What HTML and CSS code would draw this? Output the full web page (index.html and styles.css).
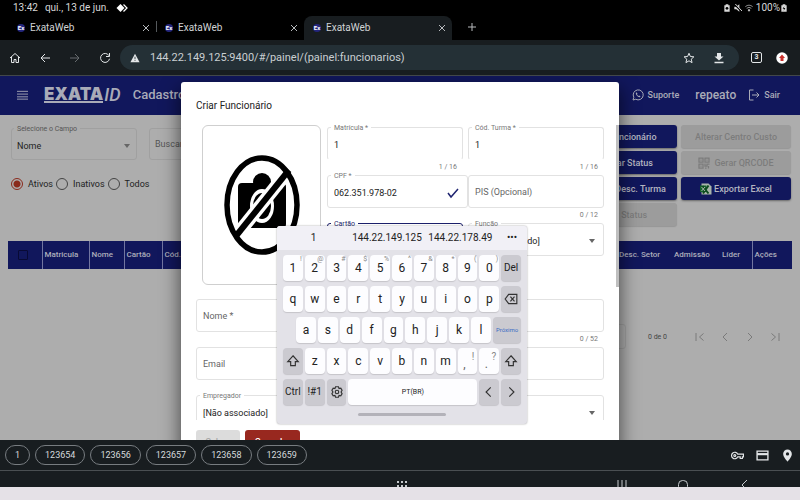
FILE: index.html
```html
<!DOCTYPE html>
<html lang="pt-BR">
<head>
<meta charset="utf-8">
<title>ExataWeb</title>
<link rel="stylesheet" href="styles.css">
</head>
<body>
<div class="status">
  <span>13:42</span><span>qui., 13 de jun.</span>
  <svg class="i12" viewBox="0 0 24 20" fill="currentColor"><path d="M9 2l8 8-8 8-8-8z"/><path d="M15 3l7 7-7 7" fill="none" stroke="currentColor" stroke-width="2.500"/></svg>
  <div class="status-right">
    <svg class="i8" viewBox="0 0 24 24"><path fill="currentColor" d="M8 1h8v3h4v19H4V4h4z"/><circle cx="12" cy="13" r="4" fill="#000"/></svg>
    <svg class="i8" viewBox="0 0 24 24"><path fill="currentColor" d="M1 8h6l9-7v22l-9-7H1z"/><path d="M2 1l21 21" stroke="#000" stroke-width="5"/><path d="M4 0l20 21" stroke="currentColor" stroke-width="3"/></svg>
    <svg class="i8" viewBox="0 0 24 24" fill="none" stroke="currentColor" stroke-width="2"><path d="M1 8q11-9 22 0M5 13q7-6 14 0"/><path d="M9 18q3-3 6 0l-3 4z" fill="currentColor"/></svg>
    <span>100%</span>
    <svg class="i8 batt" viewBox="0 0 24 24"><path fill="currentColor" d="M8 1h8v3h4v19H4V4h4z"/><path d="M13 7l-5 7h4l-1 6 5-8h-4z" fill="#000"/></svg>
  </div>
</div>

<div class="tabs">
  <div class="tab"><span class="fav">Ex</span><span>ExataWeb</span><button aria-label="Fechar"><svg viewBox="0 0 10 10"><path d="M2 2l6 6M8 2L2 8"/></svg></button></div>
  <div class="tab divided"><span class="fav">Ex</span><span>ExataWeb</span><button aria-label="Fechar"><svg viewBox="0 0 10 10"><path d="M2 2l6 6M8 2L2 8"/></svg></button></div>
  <div class="tab active"><span class="fav">Ex</span><span>ExataWeb</span><button aria-label="Fechar"><svg viewBox="0 0 10 10"><path d="M2 2l6 6M8 2L2 8"/></svg></button></div>
  <button class="newtab" aria-label="Nova guia"><svg viewBox="0 0 10 10"><path d="M5 1v8M1 5h8"/></svg></button>
</div>

<div class="toolbar">
  <button aria-label="Início"><svg viewBox="0 0 24 24"><path d="M2 12L12 3l10 9M5 10v11h5v-6h4v6h5V10"/></svg></button>
  <button aria-label="Voltar"><svg viewBox="0 0 24 24"><path d="M22 12H4M12 4l-8 8 8 8"/></svg></button>
  <button class="off" aria-label="Avançar"><svg viewBox="0 0 24 24"><path d="M2 12h18M12 4l8 8-8 8"/></svg></button>
  <button aria-label="Recarregar"><svg viewBox="0 0 24 24"><path d="M20 7.500a9 9 0 1 0 1 6M21 2v7h-7"/></svg></button>
  <div class="omni">
    <svg class="warn" viewBox="0 0 24 24"><path fill="#e3e6e8" d="M12 2l11 20H1z"/><path d="M12 9v6M12 17v2" stroke="#243036" stroke-width="2"/></svg>
    <input type="text" aria-label="Endereço" value="144.22.149.125:9400/#/painel/(painel:funcionarios)">
    <button aria-label="Favorito"><svg viewBox="0 0 24 24"><path d="M12 2.500l2.800 6.500 7 .6-5.300 4.700 1.600 7L12 17.600l-6.100 3.700 1.600-7L2.200 9.600l7-.6z"/></svg></button>
    <button aria-label="Baixar"><svg viewBox="0 0 24 24"><path d="M8 2h8v7h5l-9 8-9-8h5z" fill="currentColor" stroke="none"/><path d="M3 21h18" stroke-width="3"/></svg></button>
  </div>
  <button class="count">3</button>
  <button class="ext" aria-label="Atualizar"><svg viewBox="0 0 24 24"><circle cx="12" cy="12" r="11.500" fill="#fff" stroke="none"/><path d="M12 5l6 7h-3v6H9v-6H6z" fill="#c8302c" stroke="none"/></svg></button>
</div>

<div class="page">
  <header class="app">
    <button class="burger" aria-label="Menu"><svg viewBox="0 0 12 10"><path d="M0 1h12M0 4h12M0 7h12M0 9.500h12"/></svg></button>
    <div class="logo"><b>EXATA</b><i>ID</i></div>
    <h1>Cadastro</h1>
    <a href="#" class="sup"><svg viewBox="0 0 24 24"><path d="M2 22l1.600-5.500A10 10 0 1 1 7.500 20.500z"/><path d="M8 7c-1 2 0 5 3 7.500s5 2.500 6 .5l-2.500-2-1.500 1c-1.500-.7-2.500-2-3-3l1-1.500L9.500 7z" fill="currentColor" stroke="none"/></svg>Suporte</a>
    <span class="user">repeato</span>
    <a href="#"><svg viewBox="0 0 24 24"><path d="M11 2H3v20h8M8 12h14M17 7l5 5-5 5"/></svg>Sair</a>
  </header>

  <main>
    <div class="top">
      <div class="filters">
        <div class="row">
          <div class="dim-field sel"><label for="campo">Selecione o Campo</label><select id="campo"><option>Nome</option></select></div>
          <div class="dim-field search"><input type="text" aria-label="Buscar" placeholder="Buscar"></div>
        </div>
        <div class="radios">
          <label><input type="radio" name="st" checked>Ativos</label>
          <label><input type="radio" name="st">Inativos</label>
          <label><input type="radio" name="st">Todos</label>
        </div>
      </div>
      <div class="actions">
        <button>Criar Funcionário</button>
        <button disabled>Alterar Centro Custo</button>
        <button>Encerrar Status</button>
        <button disabled><svg viewBox="0 0 24 24" fill="none" stroke="currentColor" stroke-width="2.500"><path d="M2 2h8v8H2zM14 2h8v8h-8zM2 14h8v8H2zM14 13v5h4v-4h5M14 22h3M21 18v5M5 6h2M17 6h2M5 18h2"/></svg>Gerar QRCODE</button>
        <button>Importar Desc. Turma</button>
        <button><svg class="xl" viewBox="0 0 24 24"><path d="M3 1h14l6 6v16H3z" fill="#a9b5aa"/><path d="M0 5h13v13H0z" fill="#14602c"/><path d="M5 6l12 15M17 5L6 21" stroke="#0c4a1f" stroke-width="4"/><path d="M3 8l7 8M10 8l-7 8" stroke="#a9b5aa" stroke-width="2"/></svg>Exportar Excel</button>
        <button disabled>Gerar Status</button>
      </div>
    </div>
    <table>
      <thead><tr><th class="c1"><input type="checkbox" aria-label="Selecionar todos"></th><th class="c2">Matricula</th><th class="c3">Nome</th><th class="c4">Cartão</th><th>Cód.</th><th class="c5 plain">Desc. Setor</th><th class="c6 plain">Admissão</th><th class="c7 plain">Líder</th><th class="c8">Ações</th></tr></thead>
    </table>
    <div class="pager">
      <span class="psel"></span><span class="range">0 de 0</span>
      <button disabled aria-label="Primeira"><svg viewBox="0 0 24 24"><path d="M4 4v16M19 5l-8 7 8 7"/></svg></button>
      <button disabled aria-label="Anterior"><svg viewBox="0 0 24 24"><path d="M16 4l-8 8 8 8"/></svg></button>
      <button disabled aria-label="Próxima"><svg viewBox="0 0 24 24"><path d="M8 4l8 8-8 8"/></svg></button>
      <button disabled aria-label="Última"><svg viewBox="0 0 24 24"><path d="M5 5l8 7-8 7M20 4v16"/></svg></button>
    </div>
  </main>

  <div class="overlay">
    <form class="modal">
      <h2>Criar Funcionário</h2>
      <div class="scroll">
        <div class="upper">
          <div class="photo">
            <svg viewBox="0 0 76 102"><rect x="14" y="29" width="48" height="45" rx="4"/><circle cx="38" cy="28" r="9"/><ellipse cx="38" cy="52" rx="12" ry="17" fill="#fff"/><ellipse cx="38" cy="52" rx="9" ry="13"/><path d="M12 82L65 16" stroke="#fff" stroke-width="13"/><path d="M12 82L65 16" stroke="#000" stroke-width="6"/><ellipse cx="38" cy="51" rx="35" ry="47" fill="none" stroke="#000" stroke-width="5.500"/></svg>
          </div>
          <div class="grid">
            <div class="cell gap"><div class="field open"><label for="mat">Matrícula *</label><input id="mat" type="text" value="1"></div><small>1 / 16</small></div>
            <div class="cell"><div class="field open"><label for="tur">Cód. Turma *</label><input id="tur" type="text" value="1"></div><small>1 / 16</small></div>
            <div class="cell"><div class="field"><label for="cpf">CPF *</label><input id="cpf" type="text" value="062.351.978-02"><svg class="check" viewBox="0 0 12 12"><path d="M1 6l3 4 7-8"/></svg></div></div>
            <div class="cell"><div class="field bare"><input type="text" aria-label="PIS" placeholder="PIS (Opcional)"></div><small>0 / 12</small></div>
            <div class="cell gap"><div class="field focus"><label for="car">Cartão</label><input id="car" type="text"></div></div>
            <div class="cell"><div class="field arrow"><label for="fun">Função</label><select id="fun"><option>[Não associado]</option></select></div></div>
          </div>
        </div>
        <div class="cell"><div class="field bare"><input type="text" aria-label="Nome" placeholder="Nome *"></div><small>0 / 52</small></div>
        <div class="cell"><div class="field bare"><input type="text" aria-label="Email" placeholder="Email"></div></div>
        <div class="cell"><div class="field arrow"><label for="emp">Empregador</label><select id="emp"><option>[Não associado]</option></select></div></div>
        <span class="thumb"></span>
      </div>
      <div class="foot"><button type="button" disabled>Salvar</button><button type="button" class="cancel">Cancelar</button></div>
    </form>
  </div>
</div>

<div class="autofill">
  <button>1</button><button>123654</button><button>123656</button><button>123657</button><button>123658</button><button>123659</button>
  <div class="af-icons">
    <svg viewBox="0 0 24 24" fill="none" stroke="currentColor" stroke-width="2.200"><path d="M12.500 9.500H23v5h-2v3h-4v-3h-4.500a6 6 0 1 1 0-5z"/><circle cx="7" cy="12" r="1.800"/></svg>
    <svg viewBox="0 0 24 24" fill="none" stroke="currentColor" stroke-width="2.500"><path d="M2 4h20v16H2z"/><path d="M2 9.500h20" stroke-width="4"/></svg>
    <svg viewBox="0 0 24 24"><path fill="currentColor" d="M12 1a8 8 0 0 0-8 8c0 6 8 14 8 14s8-8 8-14a8 8 0 0 0-8-8z"/><circle cx="12" cy="9" r="3" fill="#181d20"/></svg>
  </div>
</div>
<div class="nav">
  <span></span>
  <svg viewBox="0 0 12 12" fill="currentColor"><path d="M1 2h2v2H1zM5 2h2v2H5zM9 2h2v2H9zM1 6h2v2H1zM5 6h2v2H5zM9 6h2v2H9z"/></svg>
  <div class="nav-right">
    <svg viewBox="0 0 12 12"><path d="M2 1v10M6 1v10M10 1v10"/></svg>
    <svg viewBox="0 0 12 12"><rect x="1.500" y="1.500" width="9" height="10" rx="4"/></svg>
    <svg viewBox="0 0 12 12"><path d="M9 1L4 6l5 5"/></svg>
  </div>
</div>
<div class="base"></div>

<div class="kbd">
  <div class="sug"><button>1</button><button>144.22.149.125</button><button>144.22.178.49</button><button class="more">•••</button></div>
  <div class="keys">
    <div class="krow"><button>1<sup>!</sup></button><button>2<sup>@</sup></button><button>3<sup>#</sup></button><button>4<sup>$</sup></button><button>5<sup>%</sup></button><button>6<sup>^</sup></button><button>7<sup>&amp;</sup></button><button>8<sup>*</sup></button><button>9<sup>(</sup></button><button>0<sup>)</sup></button><button class="fn">Del</button></div>
    <div class="krow"><button>q</button><button>w</button><button>e</button><button>r</button><button>t</button><button>y</button><button>u</button><button>i</button><button>o</button><button>p</button><button class="fn" aria-label="Apagar"><svg viewBox="0 0 24 24"><path d="M8 4h14v16H8l-6-8zM11 8l7 8M18 8l-7 8"/></svg></button></div>
    <div class="krow mid"><button>a</button><button>s</button><button>d</button><button>f</button><button>g</button><button>h</button><button>j</button><button>k</button><button>l</button><button class="fn next">Próximo</button></div>
    <div class="krow"><button class="fn" aria-label="Maiúsculas"><svg viewBox="0 0 24 24"><path d="M12 3l9 10h-5v7H8v-7H3z"/></svg></button><button>z</button><button>x</button><button>c</button><button>v</button><button>b</button><button>n</button><button>m</button><button class="punct">,<sup>!</sup></button><button class="punct">.<sup>?</sup></button><button class="fn" aria-label="Maiúsculas"><svg viewBox="0 0 24 24"><path d="M12 3l9 10h-5v7H8v-7H3z"/></svg></button></div>
    <div class="krow"><button class="fn">Ctrl</button><button class="fn">!#1</button><button class="fn" aria-label="Configurações"><svg viewBox="0 0 24 24"><path d="M9.500 3h5l1 3 3-.6 2.200 3.600L19 12l1.700 3-2.200 3.600-3-.6-1 3h-5l-1-3-3 .6L3.300 15 5 12 3.300 9l2.200-3.600 3 .6z"/><circle cx="12" cy="12" r="3"/></svg></button><button class="space">PT(BR)</button><button class="fn" aria-label="Esquerda"><svg viewBox="0 0 24 24"><path d="M15 4l-8 8 8 8"/></svg></button><button class="fn" aria-label="Direita"><svg viewBox="0 0 24 24"><path d="M9 4l8 8-8 8"/></svg></button></div>
  </div>
  <div class="handle"></div>
</div>
</body>
</html>
```
FILE: styles.css
```css
* { box-sizing: border-box; }
body {
  margin: 0;
  height: 100vh;
  display: flex;
  flex-direction: column;
  position: relative;
  overflow: hidden;
  background: #000;
  font: 9px/12px Roboto, "Liberation Sans", sans-serif;
}
button, input, select { font: inherit; color: inherit; border: 0; padding: 0; margin: 0; background: none; }
button { display: flex; align-items: center; justify-content: center; flex: none; }
svg { display: block; flex: none; }
input, select { min-width: 0; outline: 0; appearance: none; }

/* system status */
.status { display: flex; align-items: center; gap: 7px; height: 16px; padding: 0 12px 0 13px; color: #d8d8d8; font-size: 10px; }
.status-right { margin-left: auto; display: flex; align-items: center; gap: 3px; }
.i12 { width: 12px; height: 10px; color: #fff; }
.i8 { width: 8px; height: 8px; }
.batt { margin-left: -3px; }

/* browser tabs */
.tabs { display: flex; height: 24px; padding-left: 8px; color: #d0d3d5; font-size: 10px; }
.tab { position: relative; width: 148px; display: flex; align-items: center; gap: 5px; padding: 0 5px 1px 9px; }
.tab.divided::before { content: ""; position: absolute; left: 0; top: 5px; height: 11px; border-left: 1px solid #55595c; }
.tab.active { background: #181d20; border-radius: 8px 8px 0 0; }
.tab button { margin-left: auto; }
.tab svg { width: 10px; height: 10px; }
.tabs path { stroke: #b8bbbe; stroke-width: 1; fill: none; }
.fav { width: 8px; height: 8px; border-radius: 4px; background: #24267c; color: #fff; font-size: 6px; font-weight: 700; line-height: 8px; text-align: center; }
.newtab { width: 40px; padding-bottom: 2px; }
.newtab svg { width: 10px; height: 10px; }

/* browser toolbar */
.toolbar { display: flex; align-items: center; height: 36px; background: #181d20; border-bottom: 1px solid #42474a; color: #e3e6e8; }
.toolbar button { width: 30px; height: 24px; }
.toolbar svg { width: 12px; height: 12px; fill: none; stroke: currentColor; stroke-width: 2; }
.toolbar .off { color: #666b6e; }
.omni { flex: 1; display: flex; align-items: center; height: 25px; padding: 0 5px 0 10px; border-radius: 13px; background: #243036; }
.omni .warn { width: 10px; height: 10px; stroke: none; }
.omni input { flex: 1; padding-left: 10px; font-size: 11px; color: #c9cfd2; }
.toolbar .count { width: 11px; height: 11px; margin: 0 12px; border: 1px solid #e3e6e8; border-radius: 2px; font-size: 7px; line-height: 9px; font-weight: 700; }
.toolbar .ext { width: 12px; margin: 0 12px 0 2px; }

/* application page */
.page { position: relative; flex: 1; min-height: 0; overflow: hidden; background: #adadad; }
.app { display: flex; align-items: center; height: 39px; padding: 0 20px 2px 17px; background: #11175c; color: #a9abb8; font-weight: 500; }
.app svg { width: 12px; height: 12px; fill: none; stroke: currentColor; stroke-width: 2; }
.app a { display: flex; align-items: center; gap: 4px; color: inherit; text-decoration: none; }
.app .burger svg { width: 11px; height: 10px; stroke-width: 1; }
.logo { display: flex; align-items: center; margin-left: 16px; color: #a9abb8; font: 17px/17px Inter, sans-serif; }
.logo b { font-weight: 900; border-bottom: 2px solid #a9abb8; line-height: 14px; }
.logo i { font-weight: 500; font-family: Roboto, sans-serif; font-size: 18px; margin-left: 1px; }
.app h1 { margin: 0 auto 0 12px; font-size: 13px; font-weight: 500; }
.user { margin: 0 12px 0 16px; font-size: 12px; }

main { padding: 10px 8px 0; color: #222; }
.top { display: flex; justify-content: space-between; height: 116px; }
.filters { padding: 3px 0 0 3px; }
.row { display: flex; gap: 12px; }
.dim-field { position: relative; width: 126px; height: 32px; display: flex; align-items: center; padding: 3px 6px 0 5px; border: 1px solid #a0a0a0; border-radius: 3px; }
.dim-field.search { padding-top: 0; }
.dim-field label { position: absolute; left: 2px; top: -6px; padding: 0 3px; background: #adadad; color: #555; font-size: 7px; }
.dim-field select, .dim-field input { width: 100%; }
.dim-field ::placeholder { color: #555; opacity: 1; }
.sel::after, .arrow::after { content: ""; border: 3px solid transparent; border-top: 4px solid #666; border-bottom: 0; }
.radios { display: flex; gap: 3px; margin-top: 18px; }
.radios label { display: flex; align-items: center; gap: 5px; }
.radios input { width: 12px; height: 12px; border: 1px solid #444; border-radius: 50%; }
.radios input:checked { border-color: #8a2a1c; background: radial-gradient(#8a2a1c 0 3px, transparent 4px); }

.actions { display: grid; grid-template-columns: 110px 110px; gap: 3px 4px; align-content: start; padding-right: 1px; }
.actions button { height: 23px; gap: 4px; border-radius: 3px; background: #11175c; color: #b4b5c0; font-weight: 500; box-shadow: 0 1px 2px #0006; white-space: nowrap; }
.actions button:disabled { background: #9c9c9c; color: #7c7c7c; box-shadow: 0 1px 1px #0002; }
.actions svg { width: 12px; height: 12px; }
.actions .xl { margin-right: -2px; }

table { width: 100%; table-layout: fixed; border-collapse: collapse; background: #11175c; color: #adaebb; }
th { height: 28px; padding: 0 3px 1px 2px; text-align: left; font-size: 8px; font-weight: 500; white-space: nowrap; border-left: 1px solid #7276a0; }
th.plain, th:first-child { border-left: 0; }
th input { display: block; width: 10px; height: 10px; margin: 0 8px; border: 1px solid #080a35; border-radius: 1px; }
.c1 { width: 34px; } .c2 { width: 47px; } .c3 { width: 35px; } .c4 { width: 38px; }
.c5 { width: 55px; } .c6 { width: 48px; } .c7 { width: 32px; } .c8 { width: 40px; }

.pager { display: flex; justify-content: flex-end; align-items: center; margin-top: 55px; padding-right: 5px; color: #444; font-size: 7px; }
.psel { width: 60px; height: 25px; border: 1px solid #a0a0a0; border-radius: 3px; }
.range { margin: 0 20px 0 22px; }
.pager button { width: 25px; }
.pager svg { width: 12px; height: 12px; fill: none; stroke: #7a7a7a; stroke-width: 2; }

/* dialog */
.overlay { position: absolute; inset: 0; display: flex; justify-content: center; align-items: flex-start; padding-top: 6px; }
.modal { width: 438px; height: 420px; padding-top: 17px; background: #fff; border-radius: 3px; box-shadow: 0 8px 18px 2px #0008; color: #222; }
.modal h2 { margin: 0 15px; font-size: 10px; line-height: 14px; font-weight: 400; }
.scroll { position: relative; height: 300px; margin-top: 7px; padding: 7px 15px 0 15px; overflow: hidden; }
.thumb { position: absolute; right: 0; top: 5px; width: 3px; height: 162px; background: #bfbfbf; }
.upper { display: flex; gap: 6px; height: 172px; }
.photo { width: 119px; height: 160px; margin: -2px 0 0 6px; display: flex; align-items: center; justify-content: center; border: 1px solid #cfcfcf; border-radius: 6px; }
.photo svg { width: 76px; height: 102px; }
.grid { flex: 1; display: grid; grid-template-columns: 141px 1fr; align-content: start; }
.cell { height: 48px; }
.cell.gap { padding-right: 5px; }
.cell small { display: block; padding: 1px 6px 0; text-align: right; font-size: 7px; color: #777; }
.field { position: relative; height: 33px; display: flex; align-items: center; padding: 2px 6px 0; border: 1px solid #e2e2e2; border-radius: 3px; }
.field.bare { padding-top: 0; }
.field.open { border-bottom-color: transparent; }
.field.focus { border-color: #1b1f6b; }
.field label { position: absolute; left: 3px; top: -6px; padding: 0 3px; background: #fff; color: #777; font-size: 7px; }
.field.focus label { color: #1b1f6b; }
.field input, .field select { flex: 1; width: 100%; }
.field ::placeholder { color: #666; opacity: 1; }
.field.arrow { padding-right: 8px; }
.check { width: 12px; height: 12px; margin-right: 2px; fill: none; stroke: #1f2470; stroke-width: 1.5; }
.foot { display: flex; gap: 5px; margin: 10px 15px 0; }
.foot button { height: 23px; width: 44px; border-radius: 3px; background: #dcdcdc; color: #a8a8a8; font-weight: 500; }
.foot .cancel { width: 55px; background: #98281f; color: #fff; }

/* autofill strip and navigation */
.autofill { display: flex; align-items: center; gap: 5px; height: 30px; padding: 0 6px 0 5px; background: #181d20; color: #d5d9dc; }
.autofill button { height: 20px; padding: 0 9px; border: 1px solid #777c80; border-radius: 10px; }
.af-icons { display: flex; gap: 12px; margin-left: auto; }
.af-icons svg { width: 13px; height: 13px; color: #e3e6e8; }
.nav { display: grid; grid-template-columns: 1fr 12px 1fr; height: 17px; padding-left: 4px; padding-top: 8px; overflow: hidden; border-top: 1px solid #4a4f52; background: #181d20; color: #c5c9cc; }
.nav svg { width: 12px; height: 12px; }
.nav-right { display: flex; justify-content: flex-end; gap: 49px; padding-right: 50px; }
.nav-right svg { fill: none; stroke: currentColor; }
.base { height: 13px; background: #e5e1e7; }

/* floating keyboard */
.kbd { position: absolute; left: 277px; top: 226px; width: 250px; background: #e3e2e8; border-radius: 3px; box-shadow: 0 0 2px #0006; color: #222; overflow: hidden; }
.sug { display: grid; grid-template-columns: 1fr 1fr 1fr 30px; height: 24px; background: #f1f0f6; font-size: 10px; }
.keys { display: grid; gap: 5px; padding: 5px 6px 0; }
.krow { display: grid; grid-template-columns: repeat(11, 1fr); gap: 2px; }
.krow.mid { grid-template-columns: repeat(9, 1fr) 28px; padding-left: 13px; }
.krow button { position: relative; height: 26px; min-width: 0; border-radius: 4px; background: #fdfdff; box-shadow: 0 1px 1px #0002; font-size: 12px; }
.krow .fn { background: #cbcad0; font-size: 10px; }
.krow sup { position: absolute; top: 0; right: 1px; font-size: 7px; line-height: 9px; color: #888; }
.krow .next { font-size: 6px; color: #3b6cc4; }
.krow .space { grid-column: span 6; font-size: 7px; }
.krow .punct { color: #666; padding: 6px 6px 0 0; }
.krow .punct sup { top: 4px; right: 3px; font-size: 10px; }
.krow svg { width: 14px; height: 14px; fill: none; stroke: #333; stroke-width: 2; }
.handle { width: 88px; height: 3px; margin: 8px auto 8px; border-radius: 2px; background: #b3b2b9; }
```
